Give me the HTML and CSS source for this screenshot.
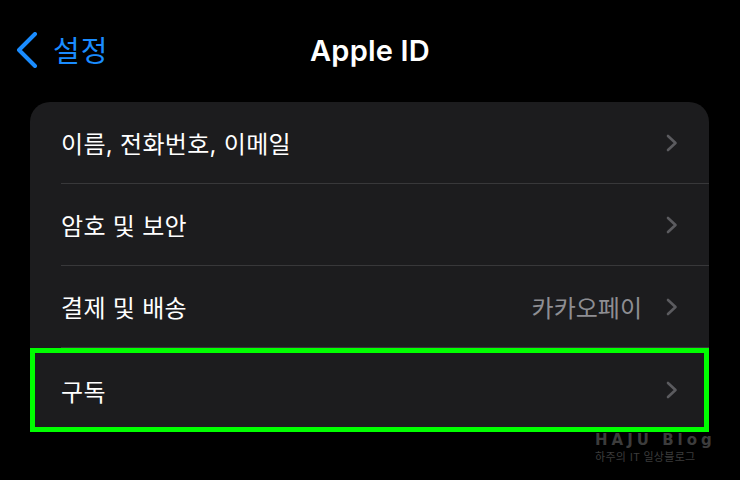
FILE: index.html
```html
<!DOCTYPE html>
<html lang="ko">
<head>
    <meta charset="UTF-8">
    <meta name="viewport" content="width=device-width, initial-scale=1.0">
    <title>Apple ID</title>
    <link rel="stylesheet" href="styles.css">
</head>
<body>

    <!-- Navigation bar -->
    <div class="navbar">
        <div class="back">
            <svg class="back-icon" width="22" height="36" viewBox="0 0 22 36">
                <path d="M19 2 L3 18 L19 34" fill="none" stroke="#1a8cff" stroke-width="4" stroke-linecap="round" stroke-linejoin="round"/>
            </svg>
            <span class="back-label">설정</span>
        </div>
        <div class="title">Apple ID</div>
        <div></div>
    </div>

    <!-- Settings list -->
    <div class="card">
        <div class="row">
            <div class="row-inner">
                <span class="label">이름, 전화번호, 이메일</span>
                <span class="chevron"><svg width="12" height="18" viewBox="0 0 12 18"><path d="M2 2 L9.5 9 L2 16" fill="none" stroke="#5b5b5f" stroke-width="2.6" stroke-linecap="round" stroke-linejoin="round"/></svg></span>
            </div>
        </div>
        <div class="row">
            <div class="row-inner">
                <span class="label">암호 및 보안</span>
                <span class="chevron"><svg width="12" height="18" viewBox="0 0 12 18"><path d="M2 2 L9.5 9 L2 16" fill="none" stroke="#5b5b5f" stroke-width="2.6" stroke-linecap="round" stroke-linejoin="round"/></svg></span>
            </div>
        </div>
        <div class="row">
            <div class="row-inner">
                <span class="label">결제 및 배송</span>
                <span class="value">카카오페이</span>
                <span class="chevron"><svg width="12" height="18" viewBox="0 0 12 18"><path d="M2 2 L9.5 9 L2 16" fill="none" stroke="#5b5b5f" stroke-width="2.6" stroke-linecap="round" stroke-linejoin="round"/></svg></span>
            </div>
        </div>
        <div class="row highlight">
            <div class="row-inner">
                <span class="label">구독</span>
                <span class="chevron"><svg width="12" height="18" viewBox="0 0 12 18"><path d="M2 2 L9.5 9 L2 16" fill="none" stroke="#5b5b5f" stroke-width="2.6" stroke-linecap="round" stroke-linejoin="round"/></svg></span>
            </div>
        </div>
    </div>

    <!-- Watermark -->
    <div class="watermark">
        <div class="wm-title">HAJU Blog</div>
        <div class="wm-sub">하주의 IT 일상블로그</div>
    </div>

</body>
</html>
```

FILE: styles.css
```css
body {
    font-family: "Inter", "Noto Sans CJK KR", sans-serif;
    margin: 0;
    background-color: #000;
    color: #fff;
    width: 740px;
    height: 480px;
    overflow: hidden;
    position: relative;
}
.navbar {
    height: 100px;
    display: grid;
    grid-template-columns: 1fr auto 1fr;
    align-items: center;
}
.back {
    display: flex;
    align-items: center;
    gap: 15px;
    padding-left: 16px;
    color: #1a8cff;
}
.back-icon {
    display: block;
}
.back-label {
    font-size: 29px;
    font-family: "Noto Sans CJK KR", sans-serif;
    margin-top: -2px;
    letter-spacing: 1px;
}
.title {
    font-size: 29px;
    font-weight: 600;
    letter-spacing: 0.2px;
}
.card {
    margin: 2px 31px 0 30px;
    background-color: #1c1c1e;
    border-radius: 20px 20px 0 0;
}
.row {
    padding-left: 31px;
}
.row-inner {
    height: 81px;
    display: flex;
    align-items: center;
    padding-right: 31px;
    border-bottom: 1px solid #38383a;
}
.row:last-child .row-inner {
    border-bottom: none;
    height: 84px;
}
.label {
    font-size: 24px;
    flex: 1;
    letter-spacing: 0.3px;
}
.value {
    font-size: 24px;
    color: #8e8e93;
    margin-right: 24px;
}
.chevron svg {
    display: block;
}
.highlight {
    outline: 5px solid #00ff00;
    outline-offset: -5px;
}
.watermark {
    position: absolute;
    left: 595px;
    top: 432px;
    color: #3c3c3c;
    font-family: "DejaVu Sans", sans-serif;
    white-space: nowrap;
    display: flex;
    flex-direction: column;
    gap: 1px;
}
.wm-title {
    font-size: 15px;
    font-weight: bold;
    letter-spacing: 4px;
    line-height: 17px;
}
.wm-sub {
    font-family: "Noto Sans CJK KR", sans-serif;
    font-size: 11px;
    line-height: 16px;
    letter-spacing: 0.3px;
    margin-top: -2px;
}
```
